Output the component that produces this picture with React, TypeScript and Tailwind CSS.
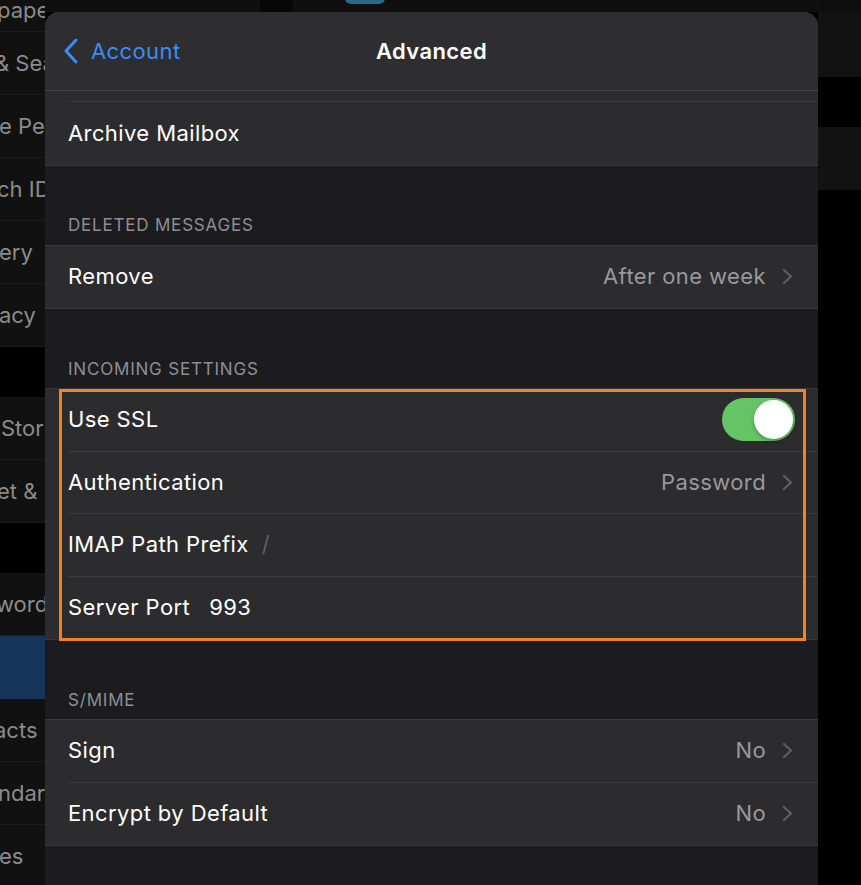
const font = { fontFamily: 'Inter, "Noto Sans", "Liberation Sans", sans-serif' };

const sidebarRows: { text: string; shift: string; kind: "row" | "gap" | "sel" }[] = [
  { text: "& Sea", shift: "-ml-[5px]", kind: "row" },
  { text: "e Pe", shift: "-ml-[1px]", kind: "row" },
  { text: "ch ID", shift: "-ml-[3px]", kind: "row" },
  { text: "ery", shift: "-ml-[1px]", kind: "row" },
  { text: "acy", shift: "-ml-[1px]", kind: "row" },
  { text: "", shift: "", kind: "gap" },
  { text: "Stor", shift: "ml-[1px]", kind: "row" },
  { text: "et &", shift: "-ml-[3px]", kind: "row" },
  { text: "", shift: "", kind: "gap" },
  { text: "word", shift: "-ml-[4px]", kind: "row" },
  { text: "", shift: "", kind: "sel" },
  { text: "acts", shift: "-ml-[6px]", kind: "row" },
  { text: "ndar", shift: "-ml-[2px]", kind: "row" },
  { text: "es", shift: "-ml-[1px]", kind: "row" },
];

function Sidebar() {
  return (
    <div className="w-[45px] shrink-0 overflow-hidden bg-[#111111] text-[22px] text-[#8b8b8b]">
      <div className="flex h-[32px] items-end border-b border-[#1c1c1c] pb-[10px] leading-none">
        <span className="-ml-[3px] whitespace-nowrap">paper</span>
      </div>
      {sidebarRows.map((r, i) =>
        r.kind === "gap" ? (
          <div key={i} className="h-[50px] bg-black" />
        ) : r.kind === "sel" ? (
          <div key={i} className="h-[63px] bg-[#16345a]" />
        ) : (
          <div key={i} className="flex h-[63px] items-center border-b border-[#1c1c1c]">
            <span className={`whitespace-nowrap ${r.shift}`}>{r.text}</span>
          </div>
        )
      )}
    </div>
  );
}

function Chevron() {
  return (
    <svg width="11" height="17" viewBox="0 0 11 17" className="shrink-0">
      <path d="M2 2l7 6.5L2 15" fill="none" stroke="#5f5f63" strokeWidth="2.2" strokeLinecap="round" strokeLinejoin="round" />
    </svg>
  );
}

function Row({
  label,
  value,
  chevron,
  extra,
  last,
  children,
}: {
  label: string;
  value?: string;
  chevron?: boolean;
  extra?: React.ReactNode;
  last?: boolean;
  children?: React.ReactNode;
}) {
  return (
    <div className="bg-[#2c2c2e] pl-[23px]">
      <div className={`flex h-[62.5px] items-center pr-[25px] ${last ? "" : "border-b border-[#3a3a3c]"}`}>
        <span className="text-white">{label}</span>
        {extra}
        <div className="flex-1" />
        {value && <span className="mr-[16px] text-[#98989d]">{value}</span>}
        {chevron && <Chevron />}
        {children}
      </div>
    </div>
  );
}

function Header({ title }: { title: string }) {
  return (
    <div className="flex h-[80px] items-end border-b border-[#38383a] pb-[6px] pl-[23px] text-[17px] tracking-[0.8px] text-[#8e8e93]">
      {title}
    </div>
  );
}

function Toggle() {
  return (
    <div className="-mr-[2px] flex h-[43px] w-[73px] items-center justify-end rounded-full bg-[#65c466] pr-[2px]">
      <div className="h-[39px] w-[39px] rounded-full bg-white shadow-[0_2px_4px_rgba(0,0,0,0.25)]" />
    </div>
  );
}

function Sheet() {
  return (
    <div className="flex w-[773px] shrink-0 flex-col">
      {/* what sits behind the sheet at the very top */}
      <div className="flex h-[12px] bg-[#0f0f0f]">
        <div className="ml-[215px] h-[12px] w-[33px] bg-[#070707]" />
        <div className="ml-[52px] -mt-[10px] h-[14px] w-[40px] rounded-[6px] bg-[#2b6a86]" />
      </div>
      <div className="relative flex-1 overflow-hidden rounded-t-[14px] bg-[#1c1c1e] text-[22px] tracking-[0.4px]">
        {/* nav bar */}
        <div className="relative flex h-[79px] items-center border-b border-[#444446] bg-[#2e2e30]">
          <div className="flex items-center pl-[18px] text-[#3c8cf5]">
            <svg width="17" height="28" viewBox="0 0 17 28">
              <path d="M13 3L3 14l10 11" fill="none" stroke="#3c8cf5" strokeWidth="3" strokeLinecap="round" strokeLinejoin="round" />
            </svg>
            <span className="ml-[11px]">Account</span>
          </div>
          <div className="absolute inset-x-0 text-center font-semibold text-white">Advanced</div>
        </div>

        {/* previous row, scrolled under the bar */}
        <div className="h-[11px] bg-[#2c2c2e] pl-[23px]">
          <div className="h-full border-b border-[#3a3a3c]" />
        </div>
        <div className="border-b border-[#38383a]">
          <Row label="Archive Mailbox" last />
        </div>

        <Header title="DELETED MESSAGES" />
        <div className="border-b border-[#38383a]">
          <Row label="Remove" value="After one week" chevron last />
        </div>

        <Header title="INCOMING SETTINGS" />
        <div className="relative border-b border-[#38383a]">
          <Row label="Use SSL">
            <Toggle />
          </Row>
          <Row label="Authentication" value="Password" chevron />
          <Row label="IMAP Path Prefix" extra={<span className="ml-[13px] text-[#5f5f63]">/</span>} />
          <Row label="Server Port" extra={<span className="ml-[19px] text-white">993</span>} last />
          <div className="pointer-events-none absolute left-[14px] right-[12px] top-0 -bottom-[2px] border-[3px] border-[#f6821f]" />
        </div>

        <Header title="S/MIME" />
        <div className="border-b border-[#38383a]">
          <Row label="Sign" value="No" chevron />
          <Row label="Encrypt by Default" value="No" chevron last />
        </div>
      </div>
    </div>
  );
}

function RightStrip() {
  return (
    <div className="flex flex-1 flex-col bg-black">
      <div className="h-[12px] bg-[#0e0e0e]" />
      <div className="h-[65px] bg-[#121212]" />
      <div className="h-[50px] bg-black" />
      <div className="h-[63px] bg-[#121212]" />
    </div>
  );
}

export default function App() {
  return (
    <div className="flex h-[885px] w-[861px] overflow-hidden bg-black" style={font}>
      <Sidebar />
      <Sheet />
      <RightStrip />
    </div>
  );
}
